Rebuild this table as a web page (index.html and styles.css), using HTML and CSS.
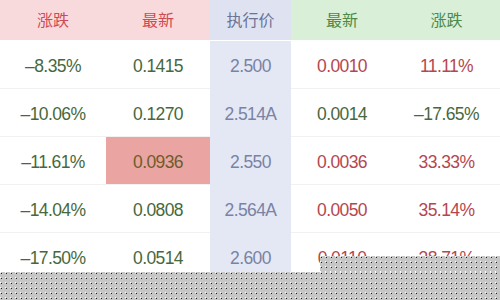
FILE: index.html
```html
<!DOCTYPE html>
<html lang="zh">
<head>
<meta charset="utf-8">
<link rel="stylesheet" href="styles.css">
</head>
<body>
<div class="table">
  <div class="row head">
    <div class="cell h-red">涨跌</div>
    <div class="cell h-red">最新</div>
    <div class="cell h-blue">执行价</div>
    <div class="cell h-green">最新</div>
    <div class="cell h-green">涨跌</div>
  </div>
  <div class="row">
    <div class="cell g">–8.35%</div>
    <div class="cell g">0.1415</div>
    <div class="cell strike">2.500</div>
    <div class="cell r">0.0010</div>
    <div class="cell r">11.11%</div>
  </div>
  <div class="row">
    <div class="cell g">–10.06%</div>
    <div class="cell g">0.1270</div>
    <div class="cell strike">2.514A</div>
    <div class="cell g">0.0014</div>
    <div class="cell g">–17.65%</div>
  </div>
  <div class="row">
    <div class="cell g">–11.61%</div>
    <div class="cell hl">0.0936</div>
    <div class="cell strike">2.550</div>
    <div class="cell r">0.0036</div>
    <div class="cell r">33.33%</div>
  </div>
  <div class="row">
    <div class="cell g">–14.04%</div>
    <div class="cell g">0.0808</div>
    <div class="cell strike">2.564A</div>
    <div class="cell r">0.0050</div>
    <div class="cell r">35.14%</div>
  </div>
  <div class="row">
    <div class="cell g">–17.50%</div>
    <div class="cell g">0.0514</div>
    <div class="cell strike">2.600</div>
    <div class="cell r">0.0110</div>
    <div class="cell r">38.71%</div>
  </div>
</div>
<div class="mask mask-bottom"></div>
<div class="mask mask-right"></div>
</body>
</html>
```
FILE: styles.css
```css
html, body {
  margin: 0;
  padding: 0;
  background: #fff;
  width: 500px;
  height: 300px;
  overflow: hidden;
  position: relative;
}
.table {
  display: flex;
  flex-direction: column;
  font-family: "Liberation Sans", "Noto Sans CJK SC", sans-serif;
  font-size: 17.5px;
  letter-spacing: -0.6px;
}
.row {
  display: grid;
  grid-template-columns: 106px 104px 81px 102px 107px;
  height: 48px;
  box-sizing: border-box;
  border-bottom: 1px solid #f1f1f1;
}
.row.head {
  height: 41px;
  border-bottom: 1px solid #fff;
}
.cell {
  display: flex;
  align-items: center;
  justify-content: center;
  padding-top: 3px;
}
.head .cell {
  font-family: "Noto Sans CJK SC", sans-serif;
  font-size: 16px;
  letter-spacing: 0;
  padding-top: 0;
  padding-bottom: 3px;
}
.h-red { background: #f8dadd; color: #cf4a53; }
.h-blue { background: #dfe3f1; color: #6c7396; }
.h-green { background: #d9efd7; color: #4b8a47; }
.strike {
  background: #e4e8f4;
  color: #7a82a6;
  margin-bottom: -1px;
}
.g { color: #47683d; }
.r { color: #b4474e; }
.hl {
  background: #eaa4a1;
  color: #6e5d2c;
}
.mask {
  position: absolute;
  background-color: #c6c6c6;
  background-image:
    conic-gradient(at 1px 1px, transparent 75%, #fcfcfc 0),
    conic-gradient(at 1px 1px, transparent 75%, #222 0);
  background-size: 5px 5px;
  background-position: 0 0, 1px 1px;
}
.mask-bottom {
  left: 0;
  top: 272px;
  width: 500px;
  height: 28px;
}
.mask-right {
  left: 320px;
  top: 256px;
  width: 180px;
  height: 16px;
}
```
